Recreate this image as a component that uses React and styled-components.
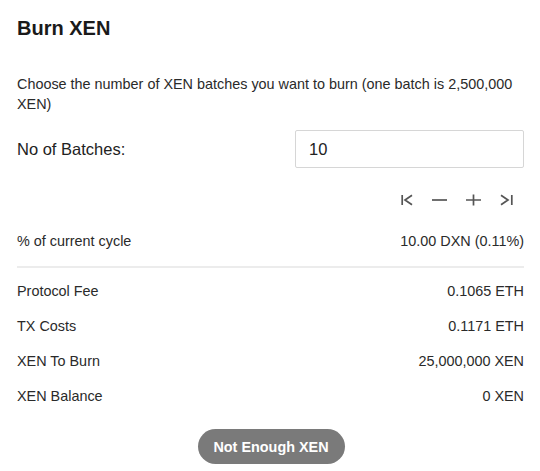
import React from "react";
import styled, { createGlobalStyle } from "styled-components";

const Global = createGlobalStyle`
  body {
    margin: 0;
    background: #fff;
    font-family: "Liberation Sans", Arial, sans-serif;
    color: #222;
  }
`;

const Card = styled.div`
  width: 540px;
  box-sizing: border-box;
  padding: 16px 16px 0 17px;
`;

const Title = styled.h2`
  margin: 0;
  font-size: 20px;
  line-height: 24px;
  font-weight: 700;
  color: #1a1a1a;
`;

const Desc = styled.p`
  margin: 34px 0 0;
  font-size: 14.4px;
  line-height: 20px;
  color: #2a2a2a;
`;

const BatchRow = styled.div`
  display: grid;
  grid-template-columns: 1fr 229px;
  align-items: center;
  margin-top: 16px;
`;

const BatchLabel = styled.label`
  font-size: 16.5px;
  color: #222;
`;

const Input = styled.input`
  height: 38px;
  box-sizing: border-box;
  border: 1px solid #d6d6d6;
  border-radius: 2px;
  padding: 0 13px;
  font-family: inherit;
  font-size: 16.5px;
  color: #222;
  outline: none;
`;

const Controls = styled.div`
  display: flex;
  justify-content: flex-end;
  align-items: center;
  gap: 19px;
  margin-top: 26px;
  padding-right: 11px;
`;

const IconBtn = styled.button`
  border: 0;
  background: none;
  padding: 0;
  height: 12px;
  display: flex;
  cursor: pointer;
  color: #555;
`;

const Row = styled.div`
  display: flex;
  justify-content: space-between;
  align-items: center;
  height: ${(p) => p.h || 35}px;
  margin-top: ${(p) => p.mt || 0}px;
  font-size: 14.4px;
  color: #2a2a2a;
`;

const Divider = styled.hr`
  border: 0;
  border-top: 2px solid #ececec;
  margin: 6px 0 5px;
`;

const Footer = styled.div`
  display: flex;
  justify-content: center;
  margin-top: 16px;
`;

const Button = styled.button`
  height: 35px;
  width: 147px;
  border: 0;
  border-radius: 18px;
  background: #7a7a7a;
  color: #fff;
  font-family: inherit;
  font-weight: 700;
  font-size: 14.4px;
  margin-left: 1px;
`;

const Icon = ({ w, d }) => (
  <svg width={w} height="12" viewBox={`0 0 ${w} 12`} fill="none" stroke="currentColor" strokeWidth="1.7">
    <path d={d} />
  </svg>
);

const rows = [
  ["Protocol Fee", "0.1065 ETH"],
  ["TX Costs", "0.1171 ETH"],
  ["XEN To Burn", "25,000,000 XEN"],
  ["XEN Balance", "0 XEN"],
];

export default function App() {
  return (
    <Card>
      <Global />
      <Title>Burn XEN</Title>
      <Desc>
        Choose the number of XEN batches you want to burn (one batch is 2,500,000
        XEN)
      </Desc>
      <BatchRow>
        <BatchLabel>No of Batches:</BatchLabel>
        <Input defaultValue="10" />
      </BatchRow>
      <Controls>
        <IconBtn><Icon w={12} d="M1.2 1v10M11 1.2 4 6l7 4.8" /></IconBtn>
        <IconBtn><Icon w={15} d="M0 6h15" /></IconBtn>
        <IconBtn><Icon w={15} d="M0 6h15M7.5 0.5v11" /></IconBtn>
        <IconBtn><Icon w={13} d="M1 1.2 8 6l-7 4.8M11.8 1v10" /></IconBtn>
      </Controls>
      <Row h={38} mt={16}>
        <span>% of current cycle</span>
        <span>10.00 DXN (0.11%)</span>
      </Row>
      <Divider />
      {rows.map(([k, v]) => (
        <Row key={k}>
          <span>{k}</span>
          <span>{v}</span>
        </Row>
      ))}
      <Footer>
        <Button>Not Enough XEN</Button>
      </Footer>
    </Card>
  );
}
